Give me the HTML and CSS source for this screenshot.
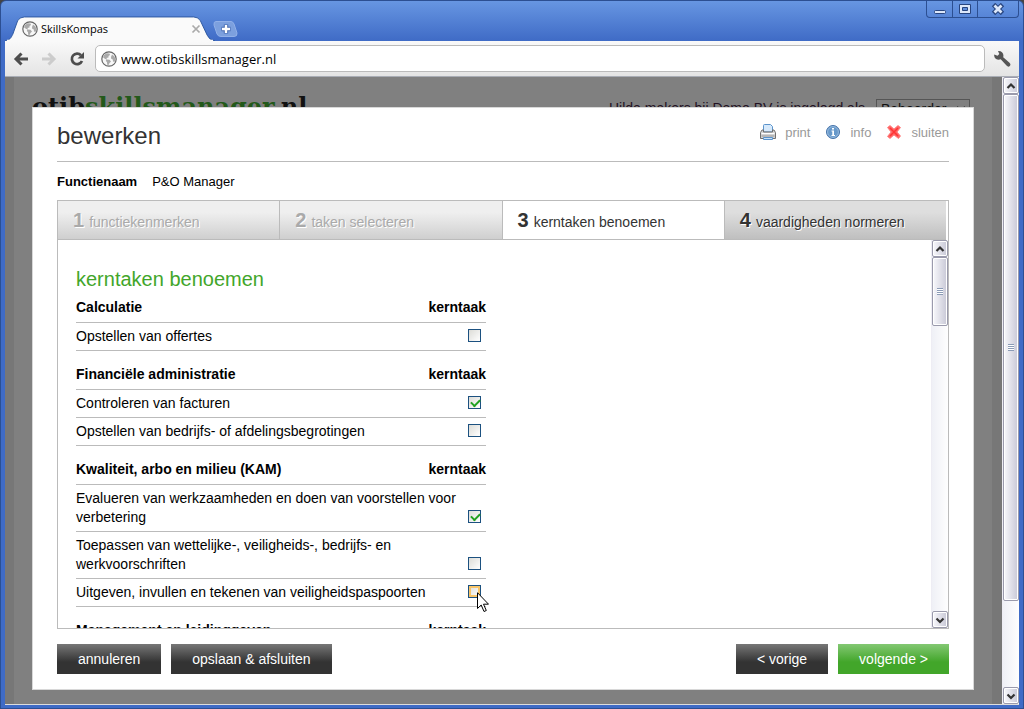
FILE: index.html
```html
<!DOCTYPE html>
<html lang="nl">
<head>
<meta charset="utf-8">
<title>SkillsKompas</title>
<link rel="stylesheet" href="styles.css">
</head>
<body>
<svg class="defs" aria-hidden="true">
  <defs>
    <symbol id="globe" viewBox="0 0 16 16">
      <circle cx="8" cy="8" r="7.2" fill="#f8f8f8" stroke="#666" stroke-width="1.2"/>
      <path d="M2.5 4.5 5.5 2.2 8.5 2.5 9 4 7.500 5 7.500 6.500 5.500 7 6 8.500 4.200 8 2.200 6.500zM5.500 8.500 8.500 8.800 10 10.500 8.500 12 7.500 14 6.200 13.800 6 11.200 4.800 9.800zM11 3.500 13.500 5.500 14.500 8.500 13.500 11 12 10.500 11.800 8.500 10.200 7.800 10 6z" fill="#aaa"/>
    </symbol>
    <symbol id="up" viewBox="0 0 10 10"><path d="M1.500 7 5 3.500 8.500 7" fill="none" stroke="#333" stroke-width="2.200"/></symbol>
    <symbol id="down" viewBox="0 0 10 10"><path d="M1.500 3.500 5 7 8.500 3.500" fill="none" stroke="#333" stroke-width="2.200"/></symbol>
  </defs>
</svg>
<div class="window">
  <header class="titlebar">
    <div class="tab">
      <svg class="tab-shape" viewBox="0 0 216 26" preserveAspectRatio="none" aria-hidden="true"><path d="M0 26C5 25 6 23 8 19L13 5Q15 1 20 1H194Q199 1 201 5L208 20Q210 25 216 26z" fill="#fafafa" stroke="#2d57a0"/><path d="M2 25.500H214" stroke="#f9f9f9" stroke-width="1.500"/></svg>
      <svg class="icon16"><use href="#globe"/></svg>
      <span class="tab-title">SkillsKompas</span>
      <button class="plain tab-close" aria-label="Tabblad sluiten"><svg width="10" height="10" viewBox="0 0 10 10"><path d="M1.500 1.500 8.500 8.500M8.500 1.500 1.500 8.500" stroke="#aaa" stroke-width="1.700"/></svg></button>
    </div>
    <button class="plain new-tab" aria-label="Nieuw tabblad"><svg width="26" height="16" viewBox="0 0 26 16"><path d="M3 .5H18Q20 .5 21 3L24 12Q24.500 15.500 21 15.500H8Q5 15.500 4 13L1 4Q.5.5 3 .5z" fill="#7ca0de" stroke="#91b0e8"/><path d="M13 3.500V12.500M8.500 8H17.500" stroke="#4369b0" stroke-width="4.400"/><path d="M13 4V12M9 8H17" stroke="#fff" stroke-width="2.400"/></svg></button>
    <div class="window-buttons">
      <button class="plain wb" aria-label="Minimaliseren"><svg width="14" height="12" viewBox="0 0 14 12"><rect x="1.500" y="7.500" width="11" height="3" rx="1" fill="#dce7fa" stroke="#28457f"/></svg></button>
      <button class="plain wb" aria-label="Maximaliseren"><svg width="14" height="12" viewBox="0 0 14 12"><path d="M1.500 1.500H12.500V10.500H1.500zM4.500 4.500V7.500H9.500V4.500z" fill="#dce7fa" fill-rule="evenodd" stroke="#28457f"/></svg></button>
      <button class="plain wb wb-close" aria-label="Sluiten"><svg width="14" height="12" viewBox="0 0 14 12"><path d="M2.500 1.500 11.500 10.500M11.500 1.500 2.500 10.500" stroke="#28457f" stroke-width="4.800"/><path d="M3.500 2.500 10.500 9.500M10.500 2.500 3.500 9.500" stroke="#dce7fa" stroke-width="2.800"/></svg></button>
    </div>
  </header>
  <div class="toolbar">
    <button class="plain nav" aria-label="Terug"><svg width="16" height="16" viewBox="0 0 16 16"><path d="M15 8H4M8.500 2.500 3 8 8.500 13.500" fill="none" stroke="#4d4d4d" stroke-width="3"/></svg></button>
    <button class="plain nav" aria-label="Vooruit"><svg width="16" height="16" viewBox="0 0 16 16"><path d="M1 8H12M7.500 2.500 13 8 7.500 13.500" fill="none" stroke="#ccc" stroke-width="3"/></svg></button>
    <button class="plain nav" aria-label="Vernieuwen"><svg width="16" height="16" viewBox="0 0 16 16"><path d="M12 4.200A5.300 5.300 0 1 0 13 10" fill="none" stroke="#4d4d4d" stroke-width="2.700"/><path d="M15 1V7.500H8.500z" fill="#4d4d4d"/></svg></button>
    <div class="address"><svg class="icon16"><use href="#globe"/></svg><input class="url" aria-label="Adres" value="www.otibskillsmanager.nl"></div>
    <button class="plain nav wrench" aria-label="Instellingen"><svg width="18" height="18" viewBox="0 0 18 18"><path d="M5 1 6.300 4 4.500 5.800 1.300 4.600Q.7 7.500 3 9 5.500 10.200 7.700 9.200L13.500 15.500Q15.200 17.500 16.800 16 18.200 14.500 16.500 12.800L10.200 7.300Q11 4 9 2.200 7.300.600 5 1z" fill="#555"/></svg></button>
  </div>
  <div class="viewport">
    <main class="page">
      <div class="site-head">
        <div class="brand">otib<span class="brand-green">skillsmanager</span>.nl</div>
        <div class="login"><label for="role">Hilde makers bij Demo BV is ingelogd als</label><select id="role"><option>Beheerder</option></select></div>
      </div>
      <section class="dialog">
        <div class="dialog-head">
          <h1 class="title">bewerken</h1>
          <nav class="tools">
            <a class="tool" href="#"><svg class="icon16" viewBox="0 0 16 16"><path d="M3.500 8V1.500Q3.500.5 4.500.5H10.500L12.500 2.500V8z" fill="#d6e9fb" stroke="#5b93cb"/><path d="M2 6H3.500V8H12.500V6H14L15.500 8.500V14.500H.5V8.500z" fill="#d4d4d4" stroke="#707070"/><path d="M1.500 9.500H14.500" stroke="#fff"/><path d="M1.500 12H14.500" stroke="#999"/><path d="M3.500 13.500H12.500V15.500H3.500z" fill="#c9e2fa" stroke="#5b93cb"/></svg><span>print</span></a>
            <a class="tool" href="#"><svg class="icon16" viewBox="0 0 16 16"><circle cx="8" cy="8" r="6.500" fill="#6899ca" stroke="#4774aa"/><circle cx="8" cy="8" r="5.400" fill="none" stroke="#a2c2e1" stroke-width=".8"/><path d="M7 4H9V5.500H7zM6.500 6.500H9V11H10V12H6.500V11H7.300V7.500H6.500z" fill="#fff"/></svg><span>info</span></a>
            <a class="tool" href="#"><svg class="icon16" viewBox="0 0 16 16"><path d="M1.500 3.500 4 1.500 8 5 12 1.500 14.500 3.500 11 8 14.500 12 12.500 14.500 8 11 4 14.500 1.500 12.500 5 8z" fill="#f66" stroke="#f77" stroke-width=".8"/><path d="M4 4 12 12M12 4 4 12" stroke="#f33" stroke-width="1.500"/></svg><span>sluiten</span></a>
          </nav>
        </div>
        <dl class="meta"><dt>Functienaam</dt><dd>P&amp;O Manager</dd></dl>
        <nav class="steps">
          <a class="step step-done" href="#"><b>1</b><span>functiekenmerken</span></a>
          <a class="step step-done" href="#"><b>2</b><span>taken selecteren</span></a>
          <a class="step step-now" href="#"><b>3</b><span>kerntaken benoemen</span></a>
          <a class="step step-next" href="#"><b>4</b><span>vaardigheden normeren</span></a>
        </nav>
        <div class="panel">
          <div class="panel-body">
            <h2 class="subtitle">kerntaken benoemen</h2>
            <table class="tasks">
              <colgroup><col><col class="col-mid"><col class="col-check"></colgroup>
              <thead><tr><th>Calculatie</th><th colspan="2">kerntaak</th></tr></thead>
              <tbody><tr><td colspan="2"><label for="t1">Opstellen van offertes</label></td><td><input id="t1" type="checkbox" class="check"></td></tr></tbody>
            </table>
            <table class="tasks">
              <colgroup><col><col class="col-mid"><col class="col-check"></colgroup>
              <thead><tr><th>Financiële administratie</th><th colspan="2">kerntaak</th></tr></thead>
              <tbody><tr><td colspan="2"><label for="t2">Controleren van facturen</label></td><td><input id="t2" type="checkbox" class="check" checked></td></tr>
              <tr><td colspan="2"><label for="t3">Opstellen van bedrijfs- of afdelingsbegrotingen</label></td><td><input id="t3" type="checkbox" class="check"></td></tr></tbody>
            </table>
            <table class="tasks">
              <colgroup><col><col class="col-mid"><col class="col-check"></colgroup>
              <thead><tr><th>Kwaliteit, arbo en milieu (KAM)</th><th colspan="2">kerntaak</th></tr></thead>
              <tbody><tr><td colspan="2"><label for="t4">Evalueren van werkzaamheden en doen van voorstellen voor verbetering</label></td><td><input id="t4" type="checkbox" class="check" checked></td></tr>
              <tr><td colspan="2"><label for="t5">Toepassen van wettelijke-, veiligheids-, bedrijfs- en werkvoorschriften</label></td><td><input id="t5" type="checkbox" class="check"></td></tr>
              <tr><td colspan="2"><label for="t6">Uitgeven, invullen en tekenen van veiligheidspaspoorten</label></td><td class="hot"><input id="t6" type="checkbox" class="check check-hover"><svg class="cursor" width="12" height="21" viewBox="0 0 12 21"><path d="M.5.7V16.500L4.200 13 7 19.500 9.300 18.500 6.500 12.200H11.500z" fill="#fff" stroke="#000"/></svg></td></tr></tbody>
            </table>
            <table class="tasks">
              <colgroup><col><col class="col-mid"><col class="col-check"></colgroup>
              <thead><tr><th>Management en leidinggeven</th><th colspan="2">kerntaak</th></tr></thead>
            </table>
          </div>
          <div class="scroll">
            <button class="plain arrow" aria-label="Omhoog"><svg width="10" height="10"><use href="#up"/></svg></button>
            <div class="thumb thumb-small"><i class="grip"></i></div>
            <button class="plain arrow arrow-end" aria-label="Omlaag"><svg width="10" height="10"><use href="#down"/></svg></button>
          </div>
        </div>
        <div class="actions">
          <button class="btn">annuleren</button>
          <button class="btn">opslaan &amp; afsluiten</button>
          <button class="btn btn-prev">&lt; vorige</button>
          <button class="btn btn-go">volgende &gt;</button>
        </div>
      </section>
    </main>
    <div class="scroll">
      <button class="plain arrow" aria-label="Pagina omhoog"><svg width="10" height="10"><use href="#up"/></svg></button>
      <div class="thumb thumb-page"><i class="grip"></i></div>
      <button class="plain arrow arrow-end" aria-label="Pagina omlaag"><svg width="10" height="10"><use href="#down"/></svg></button>
    </div>
  </div>
</div>
</body>
</html>
```
FILE: styles.css
```css
* { box-sizing: border-box; }
body {
  margin: 0;
  background: #444;
  color: #000;
  font: 14px/19px "Liberation Sans", Arial, sans-serif;
}
.defs { position: absolute; width: 0; height: 0; }
.plain { display: flex; align-items: center; justify-content: center; padding: 0; border: 0; background: none; }
.icon16 { flex: none; width: 16px; height: 16px; }
a { color: inherit; text-decoration: none; }

.window {
  display: flex;
  flex-direction: column;
  height: 100vh;
  padding: 0 4px 3px;
  border: 1px solid #2c4f92;
  border-radius: 6px 6px 0 0;
  background: linear-gradient(#6796e2, #3f6bc6 40px);
}
.titlebar { display: flex; align-items: flex-end; height: 40px; }
.tab {
  position: relative;
  display: flex;
  align-items: center;
  gap: 3px;
  width: 210px;
  height: 25px;
  padding: 0 14px 0 17px;
}
.tab-shape { position: absolute; inset: 0; width: 100%; height: 100%; }
.tab > :not(.tab-shape) { position: relative; }
.tab-title { flex: 1; font: 11px/16px "Open Sans", sans-serif; }
.new-tab { margin-bottom: 4px; margin-left: -2px; }
.window-buttons {
  display: flex;
  align-self: flex-start;
  margin-left: auto;
  border: 1px solid #2c4f92;
  border-top: 0;
  border-radius: 0 0 4px 4px;
}
.wb { width: 25px; height: 16px; }
.wb + .wb { border-left: 1px solid #2c4f92; }
.wb-close { width: 41px; }

.toolbar {
  display: flex;
  align-items: center;
  height: 36px;
  padding: 0 8px;
  border-bottom: 1px solid #a9adb5;
  background: linear-gradient(#f9f9f9, #e4e4e4);
}
.nav { width: 28px; height: 28px; }
.nav:first-child { width: 16px; margin-right: 6px; }
.wrench { width: 18px; margin-left: 8px; }
.address {
  display: flex;
  flex: 1;
  align-items: center;
  gap: 4px;
  height: 27px;
  margin-left: 4px;
  padding: 0 5px;
  border: 1px solid #bbb;
  border-radius: 5px;
  background: #fff;
}
.url { flex: 1; min-width: 0; padding: 0; border: 0; outline: 0; color: #000; background: none; font: 13px/20px "Open Sans", sans-serif; }

.viewport { display: flex; flex: 1; min-height: 0; border-bottom: 1px solid #ddd; }
.page {
  display: flex;
  flex: 1;
  flex-direction: column;
  min-width: 0;
  padding: 16px 18px 14px;
  border: solid #777;
  border-width: 0 10px 0 9px;
  background: #808080;
}
.site-head { display: flex; justify-content: space-between; height: 14px; overflow: hidden; }
.brand { color: #111; font: 700 24px/28px "DejaVu Serif", serif; }
.brand-green { color: #23591a; }
.login { display: flex; gap: 11px; height: 22px; margin-top: 6px; margin-right: 4px; color: #212; }
.login select { width: 94px; height: 20px; border: 1px solid #555; background: #808080; color: #111; font: 14px "Liberation Sans", sans-serif; }

.dialog {
  display: flex;
  flex: 1;
  flex-direction: column;
  min-height: 0;
  padding: 12px 24px 15px;
  border: 1px solid #d8d8d8;
  background: #fff;
}
.dialog-head { display: flex; justify-content: space-between; height: 42px; border-bottom: 1px solid #bbb; }
.title { margin: 0; color: #333; font-size: 24px; line-height: 32px; font-weight: 400; }
.tools { display: flex; gap: 15px; height: 24px; align-items: center; color: #999; font-size: 13px; }
.tool { display: flex; align-items: center; gap: 9px; }
.meta { display: flex; gap: 15px; margin: 0; padding: 10px 0 9px; font-size: 13px; }
.meta dt { font-weight: 700; }
.meta dd { margin: 0; }
.steps { display: flex; flex: none; height: 40px; padding-right: 2px; border: 1px solid #bbb; border-bottom: 0; }
.step {
  display: flex;
  flex: 1;
  align-items: baseline;
  gap: 5px;
  padding: 7px 15px 0;
  border-bottom: 1px solid #bbb;
  color: #333;
  text-shadow: 1px 1px #fff;
}
.step + .step { border-left: 1px solid #bbb; }
.step b { font-size: 20px; line-height: 25px; }
.step-done { color: #aaa; background: linear-gradient(#efefef 30%, #cfcfcf); }
.step-now { background: #fff; }
.step-next { background: linear-gradient(#dedede 30%, #bfbfbf); }

.panel { display: flex; flex: 1; min-height: 0; border: 1px solid #bbb; border-top: 0; }
.panel-body { flex: 1; min-width: 0; padding: 25px 18px 0; overflow: hidden; }
.subtitle { margin: 0; color: #42a62a; font-size: 20px; line-height: 28px; font-weight: 400; }
.tasks { width: 49%; min-width: 409px; margin-bottom: 9px; border-collapse: collapse; table-layout: fixed; }
.col-mid { width: 48px; }
.col-check { width: 22px; }
.tasks th, .tasks td { padding: 4px 0; border-bottom: 1px solid #bbb; text-align: left; vertical-align: bottom; }
.tasks th { padding: 5px 0; }
.tasks th:last-child { text-align: right; }
.tasks td:last-child { padding-right: 5px; }
.check {
  display: block;
  width: 13px;
  height: 13px;
  margin: 0 0 4px auto;
  border: 1px solid #1c5180;
  appearance: none;
  background: linear-gradient(135deg, #dcdcd7, #fff);
}
.check:checked::after { content: ""; display: block; width: 7px; height: 4px; margin: 2px; border: solid #21a121; border-width: 0 0 2px 2px; transform: rotate(-45deg); }
.check-hover { box-shadow: inset 0 0 0 2px #f8c56a; }
.hot { position: relative; }
.cursor { position: absolute; left: calc(100% - 9px); top: 13px; }

.scroll { display: flex; flex: none; flex-direction: column; width: 17px; border-left: 1px solid #eeedf4; background: linear-gradient(90deg, #eff0f6, #fefefe); }
.arrow, .thumb { border: 1px solid #9a9aac; border-radius: 2px; background: linear-gradient(90deg, #f8f8fc, #c8c8d6); box-shadow: inset 0 0 0 1px #fff; }
.arrow { flex: none; height: 17px; }
.arrow-end { margin-top: auto; }
.thumb { display: flex; align-items: center; justify-content: center; }
.thumb-small { height: 69px; }
.thumb-page { height: 507px; }
.grip { width: 6px; height: 7px; background: repeating-linear-gradient(#8b9bb6 0 1px, #fff 1px 2px); }

.actions { display: flex; flex: none; gap: 10px; padding-top: 15px; }
.btn { height: 30px; padding: 0 21px; border: 0; background: linear-gradient(#777, #333 60%); color: #fff; font: 14px/30px "Liberation Sans", Arial, sans-serif; }
.btn-prev { margin-left: auto; }
.btn-go { background: linear-gradient(#83c873, #42a62a 60%); }
```
